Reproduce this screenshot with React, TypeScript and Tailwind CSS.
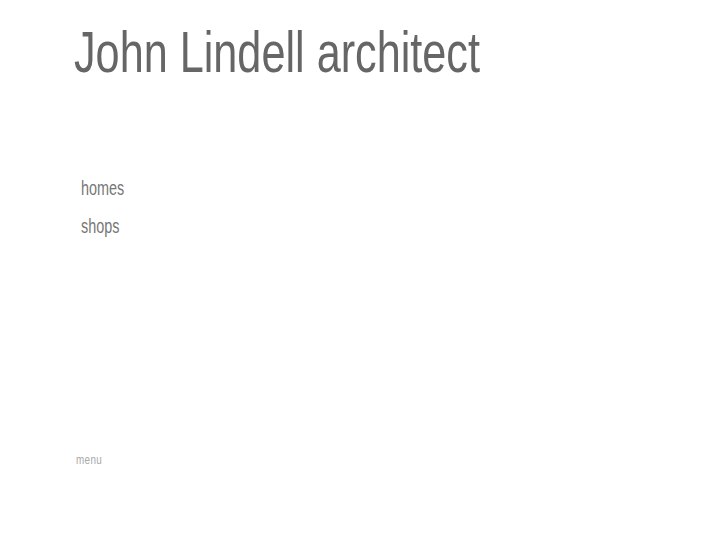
export default function App() {
  const links = ['homes', 'shops']

  return (
    <div
      className="min-h-[545px] w-full bg-white"
      style={{ fontFamily: '"Liberation Sans", Arial, sans-serif' }}
    >
      <div className="pl-[74px] pt-[23px]">
        <h1 className="inline-block origin-left scale-x-[0.745] whitespace-nowrap text-[58px] font-normal leading-none text-[#666666]">
          John Lindell architect
        </h1>
      </div>

      <nav className="mt-[97px] flex flex-col gap-[18px] pl-[81px]">
        {links.map((l) => (
          <a
            key={l}
            href="#"
            className="inline-block origin-left scale-x-[0.72] text-[20px] leading-none text-[#777777]"
          >
            {l}
          </a>
        ))}
      </nav>

      <div className="mt-[217px] flex pl-[76px] leading-none">
        <span className="inline-block origin-left scale-x-[0.76] text-[13px] leading-none tracking-[0.5px] text-[#a8a8a8]">
          menu
        </span>
      </div>
    </div>
  )
}
